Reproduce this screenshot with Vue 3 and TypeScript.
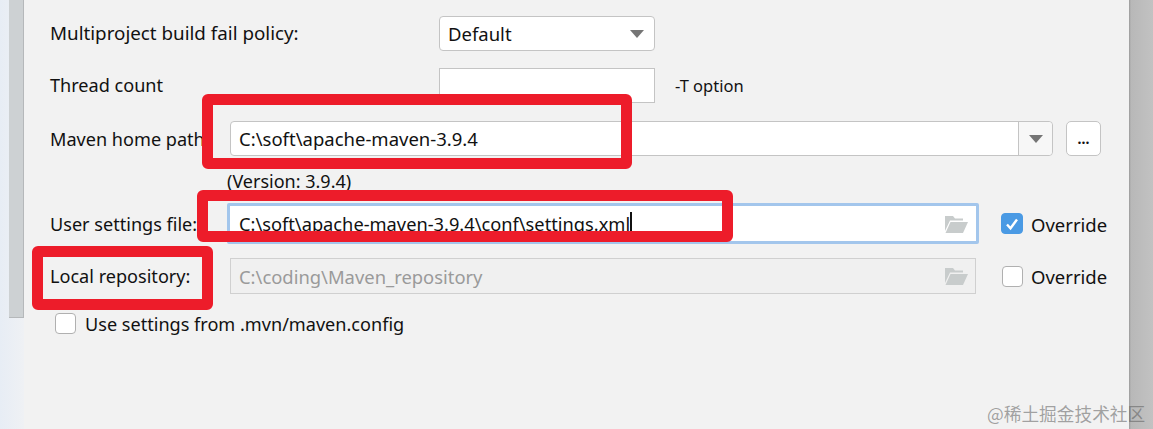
<script setup lang="ts">
const userSettings = 'C:\\soft\\apache-maven-3.9.4\\conf\\settings.xml'
</script>
<template>
    <div class="screen">
        <div class="side">
            <div class="scroll"></div>
        </div>
        <div class="panel">
            <div class="row">
                <label class="label label--wide label--policy">Multiproject build fail policy:</label>
                <div class="select">
                    <span>Default</span>
                    <i class="arrow"></i>
                </div>
            </div>
            <div class="row row--thread">
                <label class="label label--wide">Thread count</label>
                <div class="thread"></div>
                <span class="hint">-T option</span>
            </div>
            <div class="row row--home">
                <label class="label label--path">Maven home path:</label>
                <div class="combo">
                    <span class="combo_text">C:\soft\apache-maven-3.9.4</span>
                    <div class="combo_btn"><i class="arrow"></i></div>
                </div>
                <div class="dots">...</div>
            </div>
            <div class="version">(Version: 3.9.4)</div>
            <div class="row row--user">
                <label class="label label--path">User settings file:</label>
                <div class="input input--focus">
                    <span class="input_text">{{ userSettings }}</span><i class="caret"></i>
                    <svg class="folder" viewBox="0 0 24 20" width="24" height="20">
                        <path d="M1 2h8l2 2.500h8v2H6L1 17z" fill="#c8cccc" />
                        <path d="M6.500 8H24l-5 11H1.500z" fill="#c8cccc" />
                    </svg>
                </div>
                <div class="check check--on">
                    <svg viewBox="0 0 20 20" width="20" height="20">
                        <path d="M5 10.500l3.500 3.800L15 5.500" fill="none" stroke="#fff" stroke-width="2.400" />
                    </svg>
                </div>
                <span class="override">Override</span>
            </div>
            <div class="row row--local">
                <label class="label label--path">Local repository:</label>
                <div class="input input--off">
                    <span class="input_text">C:\coding\Maven_repository</span>
                    <svg class="folder" viewBox="0 0 24 20" width="24" height="20">
                        <path d="M1 2h8l2 2.500h8v2H6L1 17z" fill="#c8cccc" />
                        <path d="M6.500 8H24l-5 11H1.500z" fill="#c8cccc" />
                    </svg>
                </div>
                <div class="check"></div>
                <span class="override">Override</span>
            </div>
            <div class="row row--mvn">
                <div class="check"></div>
                <span class="mvn">Use settings from .mvn/maven.config</span>
            </div>
        </div>
        <div class="edge"></div>
        <div class="mark mark--home"></div>
        <div class="mark mark--user"></div>
        <div class="mark mark--local"></div>
        <div class="watermark">@稀土掘金技术社区</div>
    </div>
</template>
<style scoped>
.screen {
    position: relative;
    display: flex;
    width: 1153px;
    height: 429px;
    overflow: hidden;
    font-family: "Noto Sans", sans-serif;
    font-size: 18.500px;
    color: #111;
    background: #f2f2f2;
}
.side {
    flex: none;
    width: 24px;
    padding-left: 9px;
    box-sizing: border-box;
    background: linear-gradient(90deg, #e7edf5, #eff1f4);
}
.scroll {
    width: 15px;
    height: 318px;
    box-sizing: border-box;
    background: #cdd1d3;
    border-right: 1px solid #b5b8ba;
    border-bottom: 1px solid #b5b8ba;
}
.panel {
    flex: 1;
    min-width: 0;
    padding-top: 16px;
    box-sizing: border-box;
}
.edge {
    flex: none;
    width: 24px;
    background: linear-gradient(90deg, #9a9a9a 0, #b8b8b8 2px, #c2c2c2 100%);
}
.row {
    display: flex;
    align-items: center;
    height: 35px;
    padding-left: 26px;
}
.row--thread { margin-top: 17px; }
.row--home { margin-top: 18px; }
.row--user { margin-top: 13px; height: 41px; }
.row--local { margin-top: 14px; height: 36px; }
.row--mvn { margin-top: 12px; padding-left: 31px; }
.label {
    flex: none;
    font-size: 18.100px;
    white-space: nowrap;
}
.label--wide {
    width: 389px;
    padding-bottom: 2px;
}
.label--policy { font-size: 18.800px; }
.label--path { width: 180px; }
.select {
    display: flex;
    align-items: center;
    justify-content: space-between;
    width: 216px;
    height: 35px;
    box-sizing: border-box;
    padding: 0 10px 0 8px;
    background: #fff;
    border: 1px solid #c4c4c4;
    border-radius: 4px;
}
.arrow {
    width: 0;
    height: 0;
    border-left: 7px solid transparent;
    border-right: 7px solid transparent;
    border-top: 8px solid #757575;
}
.thread {
    width: 216px;
    height: 35px;
    box-sizing: border-box;
    background: #fff;
    border: 1px solid #c4c4c4;
}
.hint {
    margin-left: 20px;
    padding-bottom: 1px;
    font-size: 16.500px;
}
.combo {
    display: flex;
    width: 823px;
    height: 35px;
    box-sizing: border-box;
    background: #fff;
    border: 1px solid #c4c4c4;
    border-radius: 4px;
}
.combo_text {
    flex: 1;
    padding-left: 8px;
    line-height: 33px;
}
.combo_btn {
    display: flex;
    align-items: center;
    justify-content: center;
    width: 33px;
    background: #f7f7f7;
    border-left: 1px solid #c4c4c4;
    border-radius: 0 4px 4px 0;
}
.dots {
    width: 35px;
    height: 35px;
    box-sizing: border-box;
    margin-left: 13px;
    text-align: center;
    font-size: 14px;
    font-weight: 700;
    line-height: 33px;
    background: #fff;
    border: 1px solid #c4c4c4;
    border-radius: 5px;
}
.version {
    height: 18px;
    margin-top: 16px;
    padding-left: 203px;
    font-size: 18px;
    line-height: 18px;
}
.input {
    position: relative;
    display: flex;
    flex: none;
    align-items: center;
    box-sizing: border-box;
}
.input--focus {
    width: 752px;
    height: 41px;
    margin-left: -3px;
    padding-left: 9px;
    font-size: 18.250px;
    background: #fff;
    border: 3px solid #a3c6ec;
    border-radius: 2px;
}
.input--off {
    width: 746px;
    height: 36px;
    padding-left: 8px;
    font-size: 18.400px;
    color: #9a9a9a;
    background: #f0f0f0;
    border: 1px solid #d0d0d0;
}
.input_text { white-space: nowrap; }
.caret {
    width: 2px;
    height: 23px;
    background: #111;
}
.folder {
    position: absolute;
    right: 8px;
    top: 50%;
    transform: translateY(-50%);
}
.input--off .folder { right: 7px; }
.check {
    flex: none;
    width: 21px;
    height: 21px;
    box-sizing: border-box;
    background: #fff;
    border: 1px solid #b0b0b0;
    border-radius: 4px;
}
.check--on {
    display: flex;
    align-items: center;
    justify-content: center;
    width: 22px;
    background: #4a9ae4;
    border-color: #4a9ae4;
}
.row--user .check { margin-left: 22px; }
.row--local .check { margin-left: 26px; }
.override { margin-left: 8px; }
.row--user .override { padding-top: 2px; }
.mvn {
    margin-left: 9px;
    font-size: 18.100px;
}
.mark {
    position: absolute;
    box-sizing: border-box;
    border: 11px solid #ed1c2a;
    border-radius: 6px;
}
.mark--home { left: 202px; top: 94px; width: 430px; height: 75px; }
.mark--user { left: 197px; top: 190px; width: 536px; height: 52px; }
.mark--local { left: 32px; top: 246px; width: 181px; height: 64px; }
.watermark {
    position: absolute;
    left: 987px;
    top: 402px;
    font-family: "Noto Sans CJK SC", sans-serif;
    font-size: 17.700px;
    line-height: 22px;
    color: rgba(90, 90, 90, 0.55);
    white-space: nowrap;
}
</style>
